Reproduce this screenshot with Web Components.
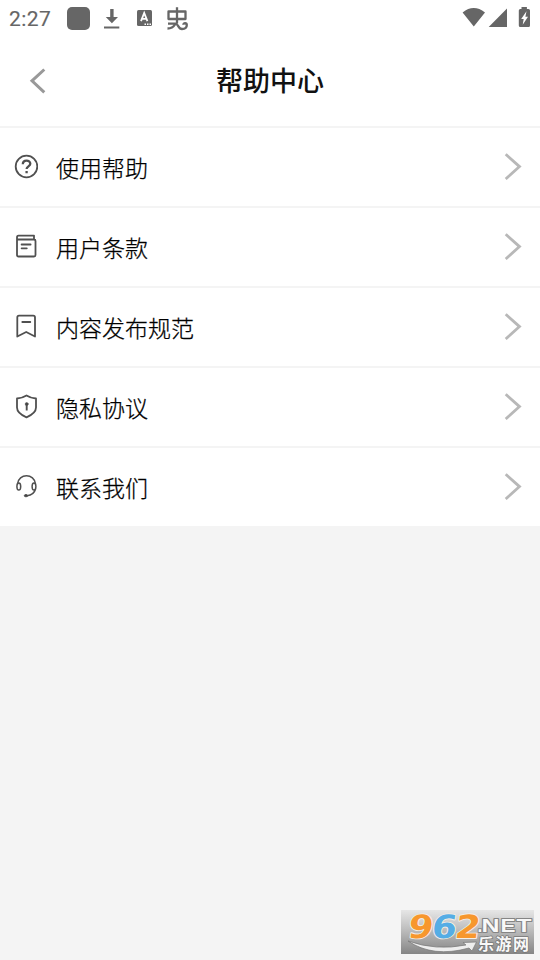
<!DOCTYPE html>
<html lang="zh-CN">
<head>
<meta charset="utf-8">
<title>帮助中心</title>
<style>
html,body{margin:0;height:100%}
body{background:#f4f4f4;font-family:"Noto Sans CJK SC",sans-serif;color:#111;overflow:hidden}
</style>
</head>
<body>
<help-page></help-page>
<script>
const define = (name, html) => customElements.define(name, class extends HTMLElement {
  constructor() {
    super();
    const t = document.createElement('template');
    t.innerHTML = html;
    this.attachShadow({mode: 'open'}).append(t.content.cloneNode(true));
  }
});

define('status-bar', `
<style>
:host{display:flex;height:36px;background:#fff;color:#666;box-sizing:border-box;padding:0 8px 0 9px;align-items:center;justify-content:space-between}
.time{font:21px/38px Roboto,sans-serif;-webkit-text-stroke:.15px #666;letter-spacing:.4px;width:58px;height:36px}
div{display:flex;align-items:center}
svg{display:block;fill:#666}
</style>
<div><span class="time">2:27</span>
<svg width="124" height="36" viewBox="67 0 124 36">
<rect x="67" y="7" width="23" height="23" rx="5"/>
<path d="M110.2 9h3.4v8h4.4l-6.1 6.3-6.1-6.3h4.4zM104 26.6h15.3v2H104z"/>
<rect x="137" y="10" width="15" height="16" rx="1.5"/>
<path d="M141 21.2l3.2-8.2 3.2 8.2M142.2 18.8h4.2" fill="none" stroke="#fff" stroke-width="1.8"/>
<path d="M144.5 23.5h1.5v1.400h-1.500zM147 23.500h1.500v1.400H147zM149.500 23.500h1.500v1.400h-1.500z" fill="#fff"/>
<path d="M168.500 11.500h17v7.500h-17zM177 7.200v16M168 23.700h7.500c3 0 2.500 5.300 6.500 5.300 3 0 4.800-1.300 4.800-4 0-2.300-3.500-2.300-3.500-.2M175 24.500c-1.500 2.500-4 4-7.500 4" fill="none" stroke="#666" stroke-width="2.300" stroke-linejoin="round"/>
</svg></div>
<svg width="70" height="36" viewBox="462 0 70 36">
<path d="M462.600 12.400Q473.700 3.800 485 12.400L473.800 26.400zM488.700 27L507 8.600V27zM521.500 7h5.400v2h1.600q1.500 0 1.500 1.500V25.500q0 1.500-1.500 1.500h-8.200q-1.500 0-1.500-1.500V10.500q0-1.500 1.500-1.500h1.200z"/>
<path d="M526.500 11.200l-5.300 7.800h2.500l-1 5.800 5.300-8.100h-2.600z" fill="#fff"/>
</svg>`);

define('nav-bar', `
<style>
:host{display:grid;grid-template-columns:76px 1fr 76px;height:90px;background:#fff;align-items:center}
svg{display:block;margin-left:28px}
h1{margin:0;text-align:center;font-size:27px;line-height:40px;font-weight:500;color:#111;padding-bottom:2px}
</style>
<svg width="20" height="28" viewBox="0 0 20 28"><path d="M16.300 2.500L4 13.800l12.300 11.500" fill="none" stroke="#999" stroke-width="3"/></svg>
<h1><slot></slot></h1>`);

define('menu-row', `
<style>
:host{display:flex;height:80px;box-sizing:border-box;border-top:2px solid #f4f4f4;background:#fff;align-items:center;padding:0 17px 0 14px}
.label{flex:1;font-size:23px;line-height:34px;font-weight:300;-webkit-text-stroke:.25px #000;margin-left:18px;color:#000}
svg{display:block}
::slotted(svg){display:block;width:24px;height:28px;fill:none;stroke:#505050;stroke-width:1.8;stroke-linejoin:round;stroke-linecap:round}
</style>
<slot name="icon"></slot><span class="label"><slot></slot></span>
<svg width="20" height="30" viewBox="0 0 20 30"><path d="M2.700 2.200L16.500 14.600 2.700 27" fill="none" stroke="#b8b8b8" stroke-width="2.800"/></svg>`);

define('site-mark', `
<style>
:host{display:block;position:absolute;left:401px;top:910px;width:133px;height:44px}
svg{display:block;overflow:visible}
text{font-family:"Liberation Sans","Noto Sans CJK SC",sans-serif;font-weight:700}
.digits text{font-family:"DejaVu Sans",sans-serif}
.out{paint-order:stroke;stroke-linejoin:round}
</style>
<svg width="133" height="44" viewBox="0 0 133 44">
<defs>
<linearGradient id="bg" x2="0" y2="1"><stop stop-color="#e6e6e6"/><stop offset=".5" stop-color="#b8b8b8"/><stop offset="1" stop-color="#858585"/></linearGradient>
</defs>
<rect width="133" height="44" fill="url(#bg)"/>
<path d="M7 31Q35 41 65 35l-3-2.500L75.500 32 71 41l-3-3Q32 48 7 31z" fill="#eee" stroke="#777" stroke-width=".7"/>
<g class="digits" transform="translate(6 27.500) skewX(-8)" font-size="32" stroke="#f4eee6" stroke-width="1.800">
<text class="out" x="0" y="0" textLength="25" lengthAdjust="spacingAndGlyphs" fill="#f7972d">9</text>
<text class="out" x="23.500" y="0" textLength="25" lengthAdjust="spacingAndGlyphs" fill="#55ade5">6</text>
<text class="out" x="47" y="0" textLength="25" lengthAdjust="spacingAndGlyphs" fill="#f7972d">2</text>
</g>
<g font-size="17.500" fill="#f8f8f8" stroke="#858585" stroke-width="1.800">
<text class="out" x="76.500" y="21.500">.</text>
<text class="out" x="80.500" y="21.500" textLength="18" lengthAdjust="spacingAndGlyphs">N</text>
<text class="out" x="99.500" y="21.500" textLength="15" lengthAdjust="spacingAndGlyphs">E</text>
<text class="out" x="115.500" y="21.500" textLength="15" lengthAdjust="spacingAndGlyphs">T</text>
</g>
<text class="out" x="77" y="39.500" font-size="16" textLength="51" fill="#f8f8f8" stroke="#777" stroke-width="1.500">乐游网</text>
</svg>`);

define('help-page', `
<style>:host{display:flex;flex-direction:column;height:960px}</style>
<status-bar></status-bar>
<nav-bar>帮助中心</nav-bar>
<menu-row><svg slot="icon" viewBox="0 0 24 28"><circle cx="12.500" cy="13.500" r="10.800"/><path stroke-width="2.300" stroke-linecap="butt" d="M8.800 11.300c0-5 7.500-4.800 7.500-.5 0 2.500-3.700 2.700-3.700 5.200M12.600 17.900v2.300"/></svg>使用帮助</menu-row>
<menu-row><svg slot="icon" viewBox="0 0 24 28"><path d="M4.500 2.600H20V6.300M3 6.500H20q1.500 0 1.500 1.500V22q0 1.500-1.500 1.500H4.500Q3 23.500 3 22V4.500Q3 2.600 4.500 2.600M7.600 11.500h9M7.600 15.300h5.200"/></svg>用户条款</menu-row>
<menu-row><svg slot="icon" viewBox="0 0 24 28"><path d="M3.300 23.500V4.500Q3.300 2.600 5 2.600H19.300Q21 2.600 21 4.500V23.500L12.200 19zM8.300 9h8"/></svg>内容发布规范</menu-row>
<menu-row><svg slot="icon" viewBox="0 0 24 28"><path d="M12.500 2.500Q17 5.300 22 5.500V14.500Q22 20.300 12.500 24.300 3 20.300 3 14.500V5.500Q8 5.300 12.500 2.500z"/><path stroke-width="1.900" stroke-linecap="butt" d="M12.700 11v6.500"/><circle cx="12.700" cy="11" r="1.500" fill="#444" stroke-width=".6"/></svg>隐私协议</menu-row>
<menu-row><svg slot="icon" viewBox="0 0 24 28"><path stroke-width="1.500" d="M3.500 11C4.500 0 20.500 0 21.500 11M21.500 16Q20 22 13 22.700"/><ellipse cx="4.800" cy="13.500" rx="1.900" ry="3.500" stroke-width="1.500"/><ellipse cx="20" cy="13.500" rx="1.900" ry="3.500" stroke-width="1.500"/><ellipse cx="12" cy="22.700" rx="1.700" ry="1.100" fill="#444" stroke-width="1"/></svg>联系我们</menu-row>
<site-mark></site-mark>`);
</script>
</body>
</html>
